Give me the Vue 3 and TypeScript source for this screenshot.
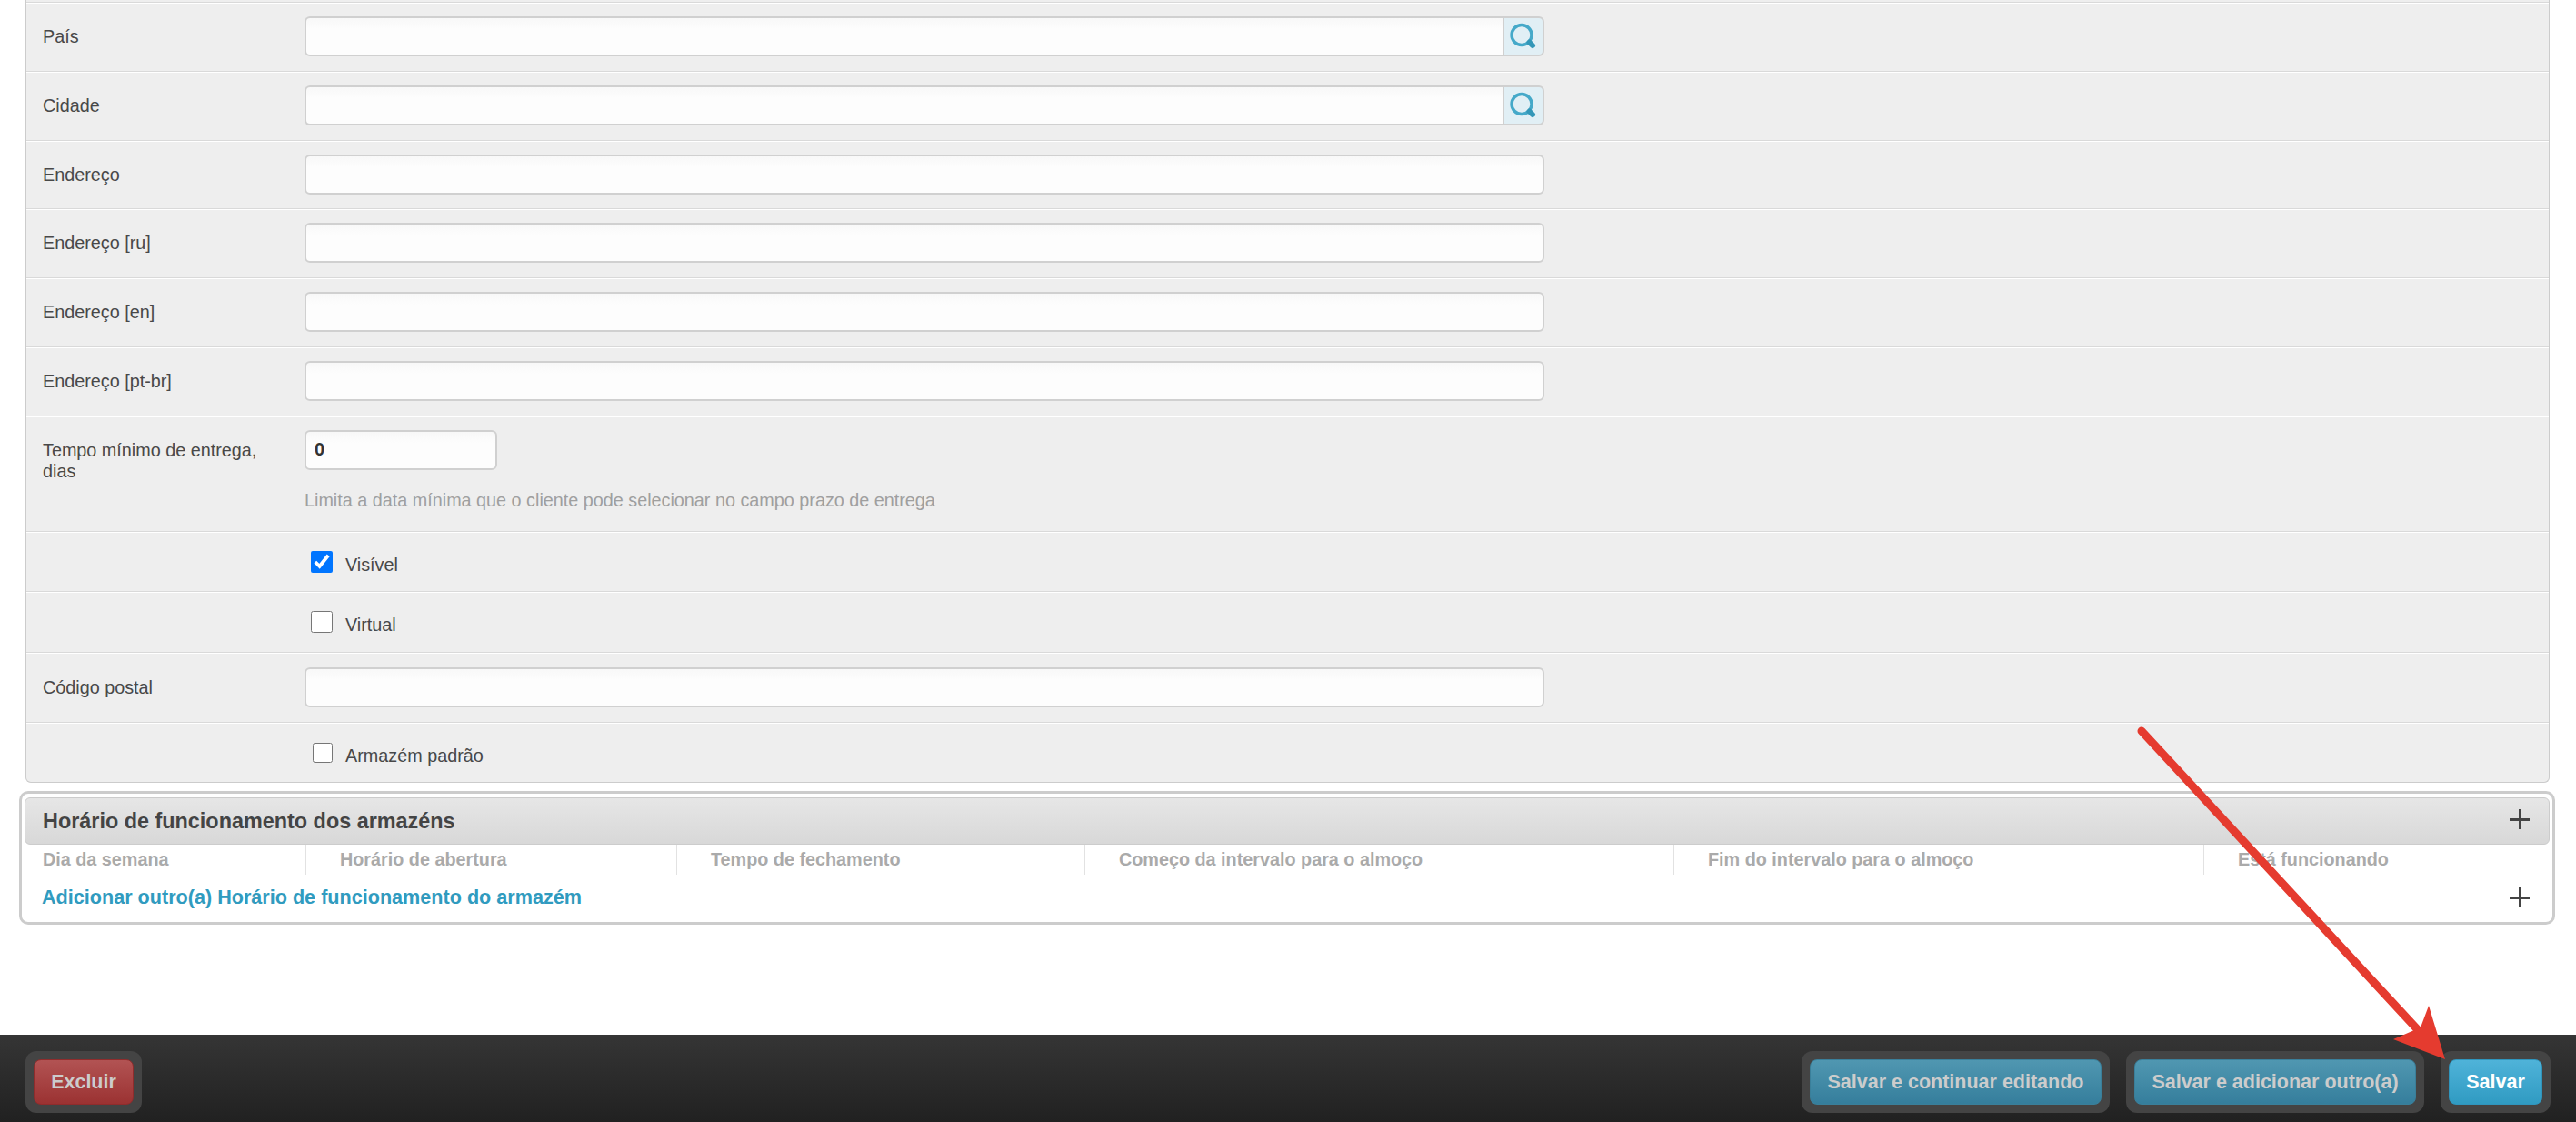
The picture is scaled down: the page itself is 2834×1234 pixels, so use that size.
<script setup lang="ts">
interface Field {
  label: string;
  kind: "lookup" | "text";
}

const addressFields: Field[] = [
  { label: "País", kind: "lookup" },
  { label: "Cidade", kind: "lookup" },
  { label: "Endereço", kind: "text" },
  { label: "Endereço [ru]", kind: "text" },
  { label: "Endereço [en]", kind: "text" },
  { label: "Endereço [pt-br]", kind: "text" },
];

const columns = [
  { title: "Dia da semana", width: 310 },
  { title: "Horário de abertura", width: 408 },
  { title: "Tempo de fechamento", width: 449 },
  { title: "Começo da intervalo para o almoço", width: 648 },
  { title: "Fim do intervalo para o almoço", width: 583 },
  { title: "Está funcionando", width: 0 },
];
</script>

<template>
  <div class="page">
    <main class="content">
      <fieldset class="module">
        <div v-for="field in addressFields" :key="field.label" class="row">
          <label class="label">{{ field.label }}</label>
          <div class="input-wrap">
            <input class="text-input" type="text" />
            <a v-if="field.kind === 'lookup'" class="lookup">
              <svg width="30" height="30" viewBox="0 0 30 30" fill="none">
                <circle cx="13" cy="13.5" r="11" stroke="#45a9c9" stroke-width="3.4" />
                <path d="M21.5 21.5l3.5 3.5" stroke="#3397b8" stroke-width="6" stroke-linecap="round" />
              </svg>
            </a>
          </div>
        </div>

        <div class="row row-delivery">
          <label class="label label-wrap">Tempo mínimo de entrega, dias</label>
          <div>
            <input class="text-input number-input" type="text" value="0" />
            <p class="help">Limita a data mínima que o cliente pode selecionar no campo prazo de entrega</p>
          </div>
        </div>

        <div class="row row-check">
          <input class="check" type="checkbox" checked />
          <span class="check-label">Visível</span>
        </div>
        <div class="row row-check">
          <input class="check" type="checkbox" />
          <span class="check-label">Virtual</span>
        </div>

        <div class="row row-postal">
          <label class="label">Código postal</label>
          <div class="input-wrap">
            <input class="text-input" type="text" />
          </div>
        </div>

        <div class="row row-check row-last">
          <input class="check check-small" type="checkbox" />
          <span class="check-label">Armazém padrão</span>
        </div>
      </fieldset>

      <section class="group">
        <header class="group-head">
          <h2>Horário de funcionamento dos armazéns</h2>
          <span class="plus plus-head"></span>
        </header>
        <div class="columns">
          <div
            v-for="col in columns"
            :key="col.title"
            class="column"
            :style="col.width ? { width: col.width + 'px' } : { flex: 1 }"
          >
            {{ col.title }}
          </div>
        </div>
        <div class="add-row">
          <a class="add-link">Adicionar outro(a) Horário de funcionamento do armazém</a>
          <span class="plus"></span>
        </div>
      </section>
    </main>

    <footer class="footer">
      <div class="btn-box">
        <button class="btn btn-danger">Excluir</button>
      </div>
      <div class="footer-right">
        <div class="btn-box">
          <button class="btn btn-muted btn-continue">Salvar e continuar editando</button>
        </div>
        <div class="btn-box">
          <button class="btn btn-muted btn-another">Salvar e adicionar outro(a)</button>
        </div>
        <div class="btn-box">
          <button class="btn btn-primary">Salvar</button>
        </div>
      </div>
    </footer>

    <svg class="arrow" width="2834" height="1234" viewBox="0 0 2834 1234">
      <path d="M2356 804L2664 1137" stroke="#e53b2f" stroke-width="9" stroke-linecap="round" fill="none" />
      <polygon points="2690,1165 2672,1106 2663,1130 2633,1143" fill="#e53b2f" />
    </svg>
  </div>
</template>

<style scoped>
.page {
  position: relative;
  display: flex;
  flex-direction: column;
  height: 1234px;
  overflow: hidden;
  background: #fff;
  color: #484848;
  font-family: "Liberation Sans", Arial, sans-serif;
  font-size: 19.8px;
}

.content {
  flex: 1;
  padding: 0 23px 0 21px;
}

.module {
  box-sizing: border-box;
  height: 861px;
  margin: 0 6px 0 7px;
  padding: 2px 0 0;
  border: 1px solid #ccc;
  border-top: 0;
  border-radius: 0 0 6px 6px;
  background: #eee;
}

.row {
  display: flex;
  box-sizing: border-box;
  height: 75.8px;
  padding: 15px 0 0 18px;
  border-top: 1px solid #d9d9d9;
  box-shadow: inset 0 1px 0 #fff;
}

.label {
  width: 288px;
  flex-shrink: 0;
  padding-top: 11px;
  line-height: 23px;
}

.label-wrap {
  width: 250px;
  margin-right: 38px;
}

.input-wrap {
  display: flex;
  width: 1364px;
}

.text-input {
  flex: 1;
  box-sizing: border-box;
  height: 44px;
  padding: 0 9px;
  border: 2px solid #d0d0d0;
  border-radius: 6px;
  background: linear-gradient(#f8f8f8, #fdfdfd 12px);
  color: #333;
  font: bold 20px "Liberation Sans", Arial, sans-serif;
  outline: none;
}

.lookup {
  display: flex;
  align-items: center;
  justify-content: center;
  box-sizing: border-box;
  width: 45px;
  height: 44px;
  border: 2px solid #d0d0d0;
  border-left-width: 1px;
  border-radius: 0 6px 6px 0;
  background: #e1eff5;
}

.input-wrap:has(.lookup) .text-input {
  border-right: 0;
  border-radius: 6px 0 0 6px;
}

.number-input {
  display: block;
  width: 212px;
  flex: none;
}

.help {
  margin: 22px 0 0;
  color: #9f9f9f;
  line-height: 23px;
}

.row-delivery {
  height: 127px;
}

.row-check {
  height: 66.5px;
  align-items: flex-start;
  padding: 21px 0 0 313px;
}

.row-postal {
  height: 77px;
  padding-top: 16px;
}

.row-last {
  height: 66px;
  padding-top: 22px;
}

.check {
  width: 24px;
  height: 24px;
  margin: 0;
}

.check-small {
  width: 22px;
  height: 22px;
  margin-left: 2px;
}

.check-label {
  margin: 4px 0 0 14px;
  line-height: 23px;
}

.row-last .check-label {
  margin-top: 3px;
}

.group {
  box-sizing: border-box;
  height: 147px;
  margin-top: 9px;
  padding: 4px 3px 0 3px;
  border: 3px solid #ccc;
  border-radius: 10px;
}

.group-head {
  display: flex;
  align-items: center;
  justify-content: space-between;
  box-sizing: border-box;
  height: 52px;
  padding: 0 21px 0 19px;
  border: 1px solid #ccc;
  border-radius: 6px;
  background: linear-gradient(#e6e6e6, #d8d8d8);
}

.group-head h2 {
  margin: 0;
  color: #444;
  font-size: 23.4px;
  font-weight: bold;
}

.plus {
  display: block;
  width: 22px;
  height: 22px;
  background:
    linear-gradient(#444, #444) center / 100% 3px no-repeat,
    linear-gradient(#444, #444) center / 3px 100% no-repeat;
}

.plus-head {
  margin-top: -4px;
}

.columns {
  display: flex;
  height: 33px;
}

.column {
  box-sizing: border-box;
  padding: 4px 0 0 37px;
  border-right: 1px solid #e2e2e2;
  color: #aaa;
  font-weight: bold;
  line-height: 24px;
}

.column:first-child {
  padding-left: 20px;
}

.column:last-child {
  border-right: 0;
}

.add-row {
  display: flex;
  align-items: center;
  justify-content: space-between;
  height: 50px;
  padding: 0 22px 0 19px;
}

.add-link {
  color: #309bbf;
  font-size: 21.6px;
  font-weight: bold;
}

.footer {
  display: flex;
  align-items: flex-start;
  justify-content: space-between;
  box-sizing: border-box;
  height: 96px;
  padding: 18px 28px 0;
  background: linear-gradient(#353535, #212121);
}

.footer-right {
  display: flex;
  gap: 18px;
}

.btn-box {
  padding: 9px;
  border-radius: 12px;
  background: #444;
}

.btn {
  display: block;
  box-sizing: border-box;
  height: 50px;
  border: 1px solid transparent;
  border-radius: 8px;
  font: bold 21.5px "Liberation Sans", Arial, sans-serif;
}

.btn-danger {
  width: 110px;
  border-color: #8f2c2c;
  background: linear-gradient(#b25353, #9b3232);
  color: #ccc;
}

.btn-muted {
  border-color: #3a7f9a;
  background: linear-gradient(#5097b1, #357e9c);
  color: #ccc;
}

.btn-continue {
  width: 321px;
}

.btn-another {
  width: 310px;
}

.btn-primary {
  width: 103px;
  border-color: #2f95bd;
  background: linear-gradient(#4fb3d9, #309bc2);
  color: #fff;
}

.arrow {
  position: absolute;
  top: 0;
  left: 0;
  pointer-events: none;
}
</style>

<style>
html,
body {
  margin: 0;
  overflow: hidden;
}
</style>
